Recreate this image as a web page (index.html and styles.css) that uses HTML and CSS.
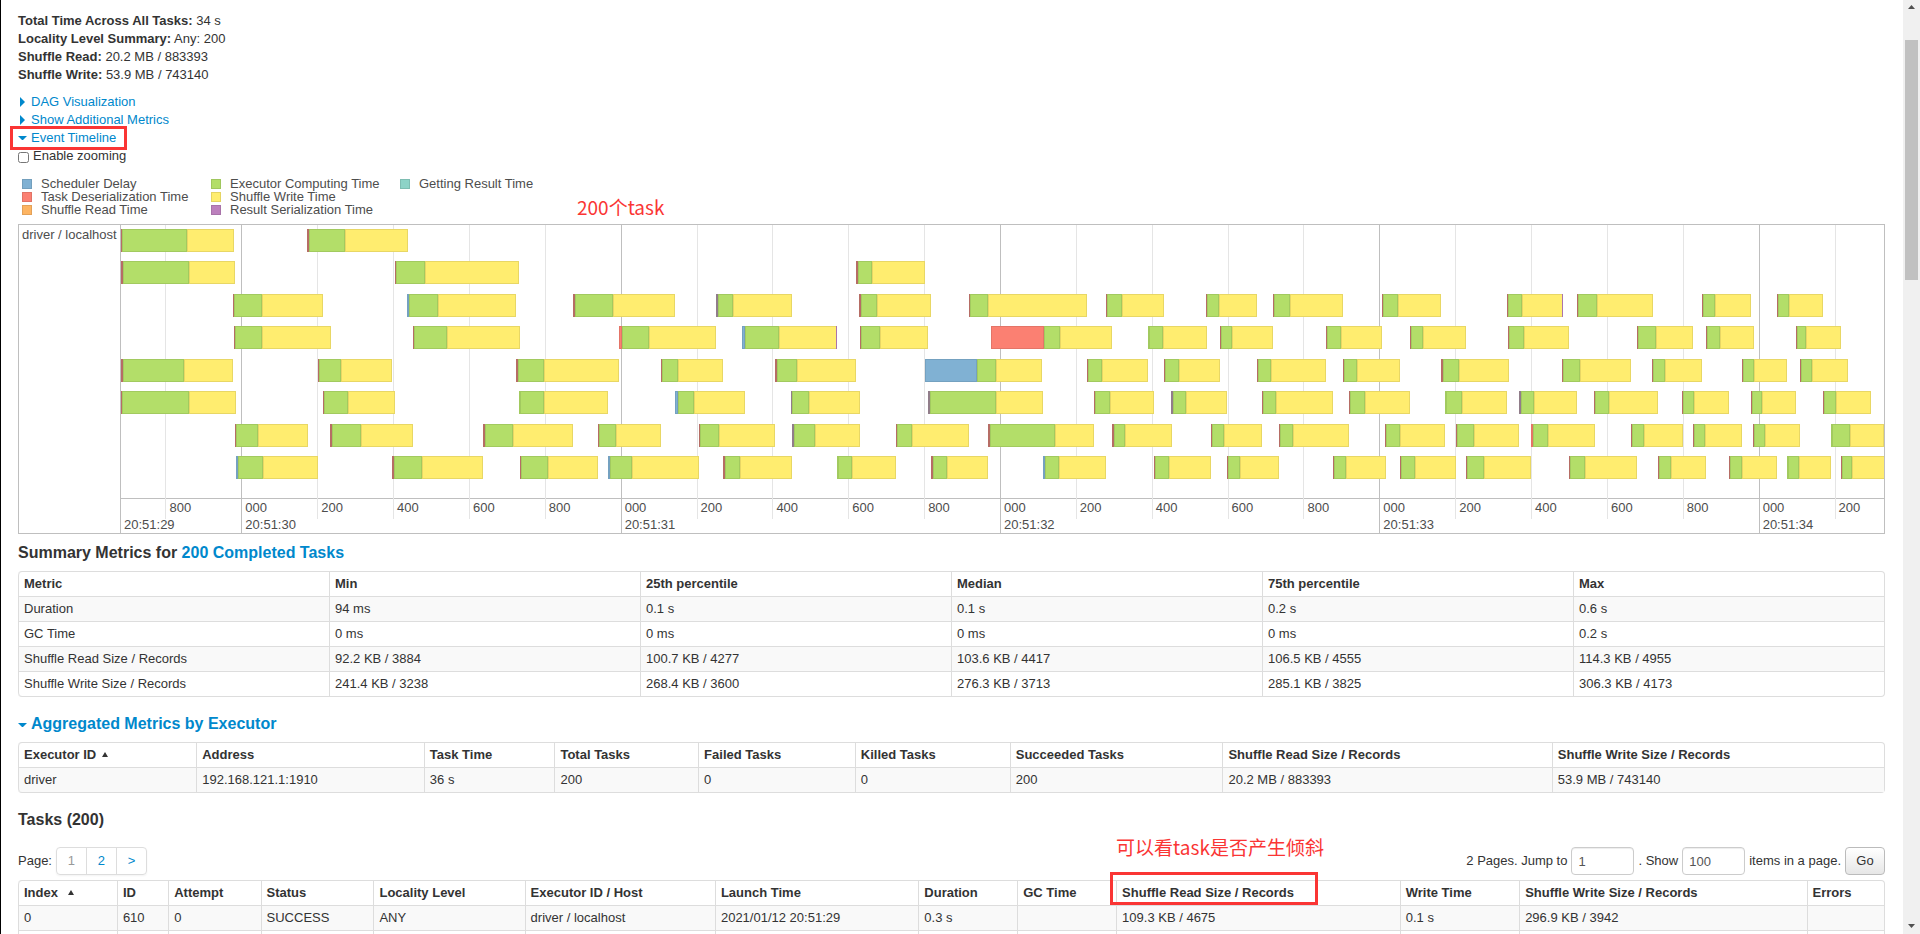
FILE: index.html
```html
<!DOCTYPE html>
<html lang="en">
<head>
<meta charset="utf-8">
<title>Details for Stage</title>
<link rel="stylesheet" href="styles.css">
</head>
<body>
<main class="page">
  <ul class="summary">
    <li><strong>Total Time Across All Tasks:</strong> 34 s</li>
    <li><strong>Locality Level Summary:</strong> Any: 200</li>
    <li><strong>Shuffle Read:</strong> 20.2 MB / 883393</li>
    <li><strong>Shuffle Write:</strong> 53.9 MB / 743140</li>
  </ul>

  <nav class="toggles">
    <a href="#dag"><span class="caret caret-right"></span>DAG Visualization</a>
    <a href="#metrics"><span class="caret caret-right"></span>Show Additional Metrics</a>
    <a href="#timeline" class="marked"><span class="caret caret-down"></span>Event Timeline</a>
  </nav>
  <label class="zooming"><input type="checkbox">Enable zooming</label>

  <ul class="legend">
    <li><span class="swatch scheduler"></span>Scheduler Delay</li>
    <li><span class="swatch deserialize"></span>Task Deserialization Time</li>
    <li><span class="swatch read"></span>Shuffle Read Time</li>
    <li><span class="swatch compute"></span>Executor Computing Time</li>
    <li><span class="swatch write"></span>Shuffle Write Time</li>
    <li><span class="swatch serialize"></span>Result Serialization Time</li>
    <li><span class="swatch result"></span>Getting Result Time</li>
  </ul>

  <section class="timeline" id="timeline">
    <p class="note note-count">200个task</p>
    <div class="group">driver / localhost</div>
    <div class="plot">
      <div class="grid" id="grid"></div>
      <div class="lanes" id="lanes"></div>
      <div class="axis"></div>
    </div>
  </section>

  <h4 class="title title-summary">Summary Metrics for <a href="#tasks">200 Completed Tasks</a></h4>
  <table class="table metrics">
    <thead><tr><th>Metric</th><th>Min</th><th>25th percentile</th><th>Median</th><th>75th percentile</th><th>Max</th></tr></thead>
    <tbody>
      <tr><td>Duration</td><td>94 ms</td><td>0.1 s</td><td>0.1 s</td><td>0.2 s</td><td>0.6 s</td></tr>
      <tr><td>GC Time</td><td>0 ms</td><td>0 ms</td><td>0 ms</td><td>0 ms</td><td>0.2 s</td></tr>
      <tr><td>Shuffle Read Size / Records</td><td>92.2 KB / 3884</td><td>100.7 KB / 4277</td><td>103.6 KB / 4417</td><td>106.5 KB / 4555</td><td>114.3 KB / 4955</td></tr>
      <tr><td>Shuffle Write Size / Records</td><td>241.4 KB / 3238</td><td>268.4 KB / 3600</td><td>276.3 KB / 3713</td><td>285.1 KB / 3825</td><td>306.3 KB / 4173</td></tr>
    </tbody>
  </table>

  <h4 class="title title-executor"><a href="#executors"><span class="caret caret-down"></span>Aggregated Metrics by Executor</a></h4>
  <table class="table executors" id="executors">
    <thead><tr><th>Executor ID<span class="sort"></span></th><th>Address</th><th>Task Time</th><th>Total Tasks</th><th>Failed Tasks</th><th>Killed Tasks</th><th>Succeeded Tasks</th><th>Shuffle Read Size / Records</th><th>Shuffle Write Size / Records</th></tr></thead>
    <tbody><tr><td>driver</td><td>192.168.121.1:1910</td><td>36 s</td><td>200</td><td>0</td><td>0</td><td>200</td><td>20.2 MB / 883393</td><td>53.9 MB / 743140</td></tr></tbody>
  </table>

  <h4 class="title title-tasks">Tasks (200)</h4>
  <div class="pager">
    <span>Page:</span>
    <ul class="pages">
      <li><a href="#p1" class="current">1</a></li>
      <li><a href="#p2">2</a></li>
      <li><a href="#next">&gt;</a></li>
    </ul>
    <form class="jump">
      <label for="page">2 Pages. Jump to</label>
      <input id="page" type="text" value="1">
      <label for="size">. Show</label>
      <input id="size" type="text" value="100">
      <span>items in a page.</span>
      <button type="button">Go</button>
    </form>
  </div>
  <table class="table tasks" id="tasks">
    <thead><tr><th>Index<span class="sort sort-wide"></span></th><th>ID</th><th>Attempt</th><th>Status</th><th>Locality Level</th><th>Executor ID / Host</th><th>Launch Time</th><th>Duration</th><th>GC Time</th><th class="marked-head">Shuffle Read Size / Records<span class="note note-skew">可以看task是否产生倾斜</span></th><th>Write Time</th><th>Shuffle Write Size / Records</th><th>Errors</th></tr></thead>
    <tbody>
      <tr><td>0</td><td>610</td><td>0</td><td>SUCCESS</td><td>ANY</td><td>driver / localhost</td><td>2021/01/12 20:51:29</td><td>0.3 s</td><td></td><td>109.3 KB / 4675</td><td>0.1 s</td><td>296.9 KB / 3942</td><td></td></tr>
      <tr><td></td><td></td><td></td><td></td><td></td><td></td><td></td><td></td><td></td><td></td><td></td><td></td><td></td></tr>
    </tbody>
  </table>
</main>
<div class="scrollbar">
  <svg width="17" height="17" viewBox="0 0 17 17"><path d="M5 9h7L8.500 5z" fill="#505050"/></svg>
  <div class="thumb"></div>
  <svg width="17" height="17" viewBox="0 0 17 17"><path d="M5 7h7L8.500 11z" fill="#505050"/></svg>
</div>
<script src="timeline.js"></script>
</body>
</html>
```
FILE: timeline.js
```js
// Each task: start, kind of its first phase, compute start, write start, end.
// Times are in thirds of a track unit, counted from ORIGIN.
const ORIGIN = 363;
const SPAN = 5289;
const KINDS = { r: "brief", R: "deserialize", b: "scheduler", p: "mixed", g: "compute" };
const LANES = [
  "363 r 366 560 702,921 r 928 1036 1224",
  "363 r 368 566 705,1185 r 1188 1276 1557,2568 r 2573 2616 2775",
  "699 r 702 786 969,1221 b 1227 1313 1548,1719 r 1724 1838 2025,2148 p 2154 2198 2376,2577 r 2583 2631 2793,2907 r 2910 2964 3261,3318 r 3321 3367 3492,3618 r 3621 3656 3771,3819 r 3822 3869 4029,4146 r 4149 4193 4323,4521 r 4524 4566 4689 s,4731 r 4734 4790 4959,5106 r 5109 5144 5253,5331 r 5334 5368 5469",
  "702 r 706 786 993,1239 r 1242 1340 1560,1857 R 1866 1946 2148,2226 b 2236 2338 2511 s,2580 r 2584 2639 2784,2973 R 3131 3180 3336,3444 g 3447 3489 3621,3660 r 3663 3696 3819,3978 r 3981 4022 4146,4230 r 4233 4270 4398,4524 r 4527 4572 4707,4911 r 4914 4969 5079,5118 r 5121 5160 5262,5388 r 5391 5419 5523",
  "363 r 370 551 699,954 r 958 1023 1176,1548 r 1555 1633 1857,1983 r 1986 2034 2169,2325 r 2331 2390 2568,2775 b 2931 2987 3126,3261 r 3264 3305 3444,3492 r 3496 3536 3660,3771 r 3775 3812 3978,4029 r 4032 4072 4200,4323 r 4328 4378 4527,4686 r 4690 4741 4893,4956 r 4959 4996 5106,5226 r 5229 5263 5361,5400 r 5403 5436 5544",
  "363 r 366 568 708,969 r 972 1044 1185,1557 g 1560 1633 1824,2025 b 2034 2081 2235,2373 p 2377 2426 2580,2784 p 2790 2988 3129,3282 r 3286 3330 3462,3513 p 3518 3558 3681,3786 r 3790 3829 3999,4047 r 4051 4095 4230,4335 g 4338 4386 4521,4557 p 4562 4601 4731,4782 r 4785 4826 4974,5046 r 5049 5083 5187,5253 r 5256 5287 5388,5469 r 5472 5508 5613",
  "705 r 709 774 924,990 r 995 1083 1239,1449 r 1454 1538 1719,1794 r 1797 1848 1983,2097 r 2100 2158 2325,2376 p 2382 2446 2580,2688 r 2691 2736 2907,2964 r 2969 3164 3282,3336 r 3342 3375 3516,3633 r 3636 3672 3786,3837 r 3840 3880 4047,4155 r 4158 4200 4335,4368 r 4371 4421 4557,4593 R 4600 4643 4785,4893 r 4896 4932 5050,5079 r 5083 5114 5226,5259 r 5263 5294 5400,5493 g 5496 5549 5652",
  "708 b 714 789 954,1176 r 1181 1265 1449,1560 r 1564 1643 1794,1824 b 1831 1896 2097,2169 r 2174 2220 2376,2511 g 2514 2557 2688,2793 r 2799 2841 2964,3129 b 3136 3176 3318,3462 r 3466 3508 3633,3681 r 3684 3719 3837,3999 r 4002 4038 4158,4200 r 4203 4244 4368,4398 r 4402 4451 4593,4707 r 4710 4755 4911,4974 r 4977 5012 5118,5187 r 5190 5226 5331,5361 g 5364 5397 5493,5523 r 5526 5557 5660"
];

const percent = (v) => (v / SPAN) * 100 + "%";

function add(parent, className, left, width) {
  const el = document.createElement("div");
  el.className = className;
  el.style.left = percent(left - ORIGIN);
  if (width) el.style.width = percent(width);
  parent.appendChild(el);
  return el;
}

const lanes = document.getElementById("lanes");
for (const line of LANES) {
  const lane = document.createElement("div");
  lane.className = "lane";
  for (const task of line.split(",")) {
    const [start, kind, compute, write, end, tail] = task.split(" ");
    add(lane, "phase " + KINDS[kind], +start, compute - start);
    add(lane, "phase compute", +compute, write - compute);
    add(lane, "phase write", +write, end - write);
    if (tail) add(lane, "phase serialize", end - 3, 3);
  }
  lanes.appendChild(lane);
}

// Minor ticks every 200 ms, a major tick with a clock label every second.
const grid = document.getElementById("grid");
const ZERO = 724;
const STEP = 227.6;
const edge = add(grid, "clock", ORIGIN);
edge.textContent = "20:51:29";
for (let i = -1; i < 22; i++) {
  const major = i % 5 === 0;
  const tick = add(grid, major ? "tick major" : "tick", ZERO + i * STEP);
  const ms = document.createElement("span");
  ms.textContent = String((((i + 5) % 5) * 200)).padStart(3, "0");
  tick.appendChild(ms);
  if (major) {
    const clock = document.createElement("span");
    clock.textContent = "20:51:" + (30 + i / 5);
    tick.appendChild(clock);
  }
}
```
FILE: styles.css
```css
*, *::after { box-sizing: border-box; }

body {
  margin: 0;
  height: 100vh;
  display: flex;
  overflow: hidden;
  border-left: 1px solid #000;
  background: #fff;
  color: #333;
  font: 13px/18px "Liberation Sans", "Noto Sans CJK SC", Arial, sans-serif;
}

a { color: #08c; text-decoration: none; }
ul { list-style: none; margin: 0; padding: 0; }

.page { flex: 1; min-width: 0; padding: 12px 18px 0 17px; }

/* Stage summary and toggles */
.toggles { display: flex; flex-direction: column; align-items: flex-start; margin-top: 9px; }
.toggles a { position: relative; }
.caret { display: inline-block; width: 13px; height: 10px; vertical-align: -1px; background: #08c; }
.caret-right { clip-path: polygon(2px 0, 7px 5px, 2px 10px); }
.caret-down { clip-path: polygon(0 3px, 9px 3px, 5px 7px, 4px 7px); }
.marked::after {
  content: "";
  position: absolute;
  inset: -3px -11px -3px -8px;
  border: 3px solid #fa3534;
}
.zooming { display: flex; align-items: center; gap: 4px; }
.zooming input { width: 11px; height: 11px; margin: 2px 0 0; }

.legend {
  display: grid;
  grid-auto-flow: column;
  grid-template-rows: repeat(3, 13px);
  grid-auto-columns: 189px;
  margin: 12px 0 8px 4px;
  line-height: 13px;
  color: #4d4d4d;
}
.legend li { display: flex; align-items: center; gap: 9px; }
.swatch { width: 10px; height: 10px; border: 1px solid rgba(0, 0, 0, .1); }

.scheduler { background: #80b1d3; }
.deserialize { background: #fb8072; }
.read { background: #fdb462; }
.compute { background: #b3de69; }
.write { background: #ffed6f; }
.serialize { background: #bc80bd; }
.result { background: #8dd3c7; }
.brief { background: #c97870; }
.mixed { background: #a08a98; }

/* Timeline */
.timeline {
  position: relative;
  display: flex;
  border: 1px solid #bfbfbf;
  color: #4d4d4d;
}
.group { width: 102px; padding: 1px 0 0 3px; white-space: nowrap; border-right: 1px solid #bfbfbf; }
.plot { position: relative; flex: 1; overflow: hidden; }
.lanes {
  position: relative;
  height: 273px;
  padding: 4px 0 19px;
  display: flex;
  flex-direction: column;
  justify-content: space-between;
}
.lane { position: relative; height: 23px; }
.phase {
  position: absolute;
  top: 0;
  bottom: 0;
  box-shadow: inset 0 0 0 1px rgba(0, 0, 0, .09);
}
.axis { height: 35px; border-top: 1px solid #bfbfbf; }
.grid { position: absolute; inset: 0; }
.tick {
  position: absolute;
  top: 0;
  height: 294px;
  padding: 274px 0 0 3px;
  border-left: 1px solid #e5e5e5;
  line-height: 17px;
}
.tick.major { height: 100%; border-color: #bfbfbf; }
.tick span { display: block; }
.clock { position: absolute; bottom: 0; padding-left: 3px; line-height: 17px; }

.note { position: absolute; margin: 0; white-space: nowrap; color: #fa3534; font: 19px/24px "Noto Sans CJK SC", sans-serif; }
.note-count { left: 558px; top: -30px; }
.note-skew { left: -1px; top: -46px; }

/* Headings */
.title { margin: 0; font-size: 16px; line-height: 20px; }
.title-summary { padding: 9px 0 8px; }
.title-executor { padding: 17px 0 8px; }
.title-tasks { padding: 17px 0 17px; }

/* Tables */
.table {
  width: 100%;
  table-layout: fixed;
  border-collapse: separate;
  border-spacing: 0;
  border: 1px solid #ddd;
  border-left: 0;
  border-radius: 4px;
  line-height: 16px;
}
.table th, .table td { height: 25px; padding: 4px 5px; text-align: left; white-space: nowrap; border-left: 1px solid #ddd; }
.table th { height: 24px; }
.table td { border-top: 1px solid #ddd; }
.table tbody tr:nth-child(odd) td { background: #f9f9f9; }
.table th:first-child { border-top-left-radius: 4px; }
.table tr:last-child td:first-child { border-bottom-left-radius: 4px; }

.executors th:nth-child(1) { width: 9.55%; }
.executors th:nth-child(2) { width: 12.2%; }
.executors th:nth-child(3) { width: 7%; }
.executors th:nth-child(4) { width: 7.7%; }
.executors th:nth-child(5) { width: 8.4%; }
.executors th:nth-child(6) { width: 8.3%; }
.executors th:nth-child(7) { width: 11.4%; }
.executors th:nth-child(8) { width: 17.65%; }

.tasks th:nth-child(1) { width: 5.3%; }
.tasks th:nth-child(2) { width: 2.75%; }
.tasks th:nth-child(3) { width: 4.95%; }
.tasks th:nth-child(4) { width: 6.05%; }
.tasks th:nth-child(5) { width: 8.1%; }
.tasks th:nth-child(6) { width: 10.2%; }
.tasks th:nth-child(7) { width: 10.9%; }
.tasks th:nth-child(8) { width: 5.3%; }
.tasks th:nth-child(9) { width: 5.3%; }
.tasks th:nth-child(10) { width: 15.2%; }
.tasks th:nth-child(11) { width: 6.4%; }
.tasks th:nth-child(12) { width: 15.4%; }

.sort {
  display: inline-block;
  margin-left: 6px;
  vertical-align: 2px;
  border: 3px solid transparent;
  border-top: 0;
  border-bottom: 5px solid #333;
}
.sort-wide { margin-left: 10px; }

.marked-head { position: relative; }
.marked-head::after {
  content: "";
  position: absolute;
  left: -7px;
  top: -9px;
  width: 208px;
  height: 33px;
  border: 3px solid #fa3534;
}

/* Pagination */
.pager { display: flex; align-items: center; gap: 4px; margin-bottom: 5px; }
.pages { display: flex; border: 1px solid #ddd; border-radius: 4px; box-shadow: 0 1px 2px rgba(0, 0, 0, .05); }
.pages a { display: block; width: 29px; line-height: 26px; text-align: center; }
.pages li + li { border-left: 1px solid #ddd; }
.pages .current { color: #999; }
.jump { display: flex; align-items: center; gap: 4px; margin-left: auto; }
.jump input {
  width: 63px;
  height: 28px;
  padding: 4px 6px;
  border: 1px solid #ccc;
  border-radius: 4px;
  box-shadow: inset 0 1px 1px rgba(0, 0, 0, .075);
  color: #555;
  font: inherit;
}
.jump button {
  width: 40px;
  height: 28px;
  padding: 0;
  border: 1px solid #bbb;
  border-radius: 4px;
  background: linear-gradient(#fff, #e6e6e6);
  color: #333;
  font: inherit;
}

/* Scroll bar */
.scrollbar { width: 17px; display: flex; flex-direction: column; background: #f0f0f0; }
.thumb { flex: 0 0 240px; margin: 23px 2px auto; background: #c1c1c1; }
```
